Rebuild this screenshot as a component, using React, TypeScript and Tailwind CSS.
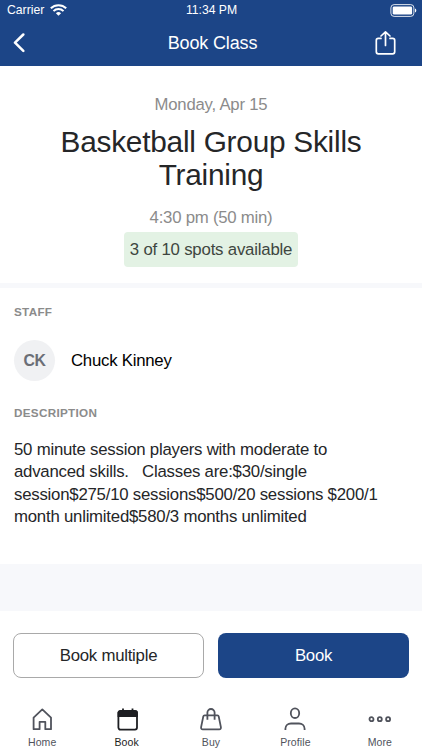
import clsx from "clsx";
import { ReactNode } from "react";

type Tab = {
  label: string;
  icon: ReactNode;
  active?: boolean;
};

const tabs: Tab[] = [
  {
    label: "Home",
    icon: (
      <path
        d="M3.600 10.600 12.300 2.400l8.700 8.200V22.200h-5.700V14.800H9.600v7.400h-6Z"
        strokeLinejoin="round"
      />
    ),
  },
  {
    label: "Book",
    active: true,
    icon: (
      <>
        <rect x="3.400" y="4" width="18.600" height="18.600" rx="2" />
        <path
          d="M4.500 3.500h16.400q1.900 0 1.900 2V10H2.600V5.500q0-2 1.900-2Z"
          fill="currentColor"
          stroke="none"
        />
        <path d="M8 1.600v3M17.500 1.600v3" />
      </>
    ),
  },
  {
    label: "Buy",
    icon: (
      <>
        <path
          d="M5.600 8.400h12.800q1.100 0 1.300 1l2.200 10.700q.3 2.200-1.700 2.200H3.800q-2 0-1.700-2.200L4.300 9.400q.2-1 1.300-1Z"
          strokeLinejoin="round"
        />
        <path d="M8.400 12.800V5.600a3.600 3.600 0 0 1 7.200 0V12.800" />
      </>
    ),
  },
  {
    label: "Profile",
    icon: (
      <>
        <ellipse cx="12" cy="6.200" rx="4.200" ry="4.800" />
        <path d="M2.400 23v-1.200c0-3.300 2.600-5.300 5.600-5.300h8c3 0 5.600 2 5.600 5.300V23" />
      </>
    ),
  },
  {
    label: "More",
    icon: (
      <>
        <circle cx="3.500" cy="12.200" r="2" />
        <circle cx="11.800" cy="12.200" r="2" />
        <circle cx="20.100" cy="12.200" r="2" />
      </>
    ),
  },
];

function StatusBar() {
  return (
    <div className="flex h-5 items-center justify-between pr-[5px] pl-[7px] text-[12.200px]">
      <div className="flex flex-1 items-center gap-[6px]">
        <span>Carrier</span>
        <svg
          className="h-[12px] w-[17px]"
          viewBox="0 0 17 12"
          fill="none"
          stroke="currentColor"
          strokeWidth="2"
        >
          <path d="M.8 4.300a11 11 0 0 1 15.400 0M3.500 7.100a7 7 0 0 1 10 0" />
          <path
            d="M8.500 11.800 5.900 9.200a3.700 3.700 0 0 1 5.200 0Z"
            fill="currentColor"
            stroke="none"
          />
        </svg>
      </div>
      <span className="pr-px">11:34 PM</span>
      <div className="flex flex-1 justify-end">
        <svg className="h-[13px] w-[27px]" viewBox="0 0 27 13" fill="none">
          <rect
            x=".9"
            y=".6"
            width="23"
            height="11.800"
            rx="3.200"
            stroke="currentColor"
            strokeOpacity=".85"
          />
          <rect x="2.700" y="2.400" width="19.400" height="8.200" rx="1.400" fill="currentColor" />
          <path d="M25 4.500c1.800.8 1.800 3.200 0 4Z" fill="currentColor" />
        </svg>
      </div>
    </div>
  );
}

export default function App() {
  return (
    <div className="flex h-[750px] w-[422px] flex-col overflow-hidden bg-white font-['Liberation_Sans',Arial,sans-serif] text-[#252628]">
      {/* Header */}
      <header className="h-[66px] shrink-0 bg-[#1c4587] text-white">
        <StatusBar />
        <div className="flex h-[46px] items-center justify-between pr-[25px] pl-[13px]">
          <div className="flex-1">
            <svg
              className="h-5 w-3"
              viewBox="0 0 12 20"
              fill="none"
              stroke="currentColor"
              strokeWidth="2.500"
            >
              <path
                d="m10.300 1.500-8.300 8.200 8.300 8.200"
                strokeLinecap="round"
                strokeLinejoin="round"
              />
            </svg>
          </div>
          <h1 className="pl-[15px] text-[18px] tracking-[-0.15px]">Book Class</h1>
          <div className="flex flex-1 justify-end">
            <svg
              className="h-[26px] w-[22px]"
              viewBox="0 0 22 26"
              fill="none"
              stroke="currentColor"
              strokeWidth="1.700"
              strokeLinecap="round"
              strokeLinejoin="round"
            >
              <path d="M6 8.400H3.300a2 2 0 0 0-2 2v11.400a2 2 0 0 0 2 2h14.400a2 2 0 0 0 2-2V10.400a2 2 0 0 0-2-2H15" />
              <path d="M10.500 15.500V1.900M6 6l4.500-4.200L15 6" />
            </svg>
          </div>
        </div>
      </header>

      {/* Class summary */}
      <section className="flex h-[217px] shrink-0 flex-col items-center pt-7 text-center">
        <p className="text-[16.700px] leading-[22px] tracking-[-0.2px] text-[#8b8b8b]">
          Monday, Apr 15
        </p>
        <h2 className="mt-[9px] w-[340px] text-[29.800px] leading-[33px] tracking-[-0.24px]">
          Basketball Group Skills Training
        </h2>
        <p className="mt-4 text-[16.800px] leading-[22px] tracking-[-0.25px] text-[#8b8b8b]">
          4:30 pm (50 min)
        </p>
        <p className="mt-[3px] h-[35px] rounded-[4px] bg-[#e3f2e4] px-[5.500px] text-[16.800px] leading-[35px] tracking-[-0.2px] text-[#3e4640]">
          3 of 10 spots available
        </p>
      </section>
      <div className="h-[5px] shrink-0 bg-[#f7f8fb]" />

      {/* Staff and description */}
      <section className="h-[276px] shrink-0 px-[14px] pt-[17px]">
        <h3 className="text-[11.700px] leading-[14px] font-bold tracking-[0.3px] text-[#8b8b8b]">
          STAFF
        </h3>
        <div className="mt-[21px] flex items-center gap-4">
          <div className="flex size-[41px] items-center justify-center rounded-full bg-[#f0f1f3] pt-px text-[15.800px] font-bold tracking-[-0.4px] text-[#6b6e76]">
            CK
          </div>
          <span className="text-[16.800px] tracking-[-0.25px] text-black">Chuck Kinney</span>
        </div>
        <h3 className="mt-[25px] text-[11.700px] leading-[14px] font-bold tracking-[0.3px] text-[#8b8b8b]">
          DESCRIPTION
        </h3>
        <p className="mt-[19px] text-[16.800px] leading-[22.300px] tracking-[-0.23px] whitespace-pre">
          {"50 minute session players with moderate to\n"}
          {"advanced skills.   Classes are:$30/single\n"}
          {"session$275/10 sessions$500/20 sessions $200/1\n"}
          {"month unlimited$580/3 months unlimited"}
        </p>
      </section>
      <div className="h-[47px] shrink-0 bg-[#f7f8fb]" />

      {/* Actions */}
      <div className="grid shrink-0 grid-cols-2 gap-[14px] px-[13px] pt-[22px] text-[16.800px] tracking-[-0.25px]">
        <button className="h-[45px] rounded-[8px] border border-[#a9a9a9]">Book multiple</button>
        <button className="h-[45px] rounded-[8px] bg-[#1c4587] text-white">Book</button>
      </div>

      {/* Bottom tabs */}
      <nav className="mt-[29px] grid shrink-0 grid-cols-5">
        {tabs.map((tab) => (
          <a
            key={tab.label}
            className={clsx(
              "flex flex-col items-center gap-1 text-[10.500px] leading-[14px] tracking-[0.1px]",
              tab.active ? "text-[#1d1e22]" : "text-[#50535c]"
            )}
          >
            <svg
              className="h-6 w-6"
              viewBox="0 0 24 24"
              fill="none"
              stroke="currentColor"
              strokeWidth="1.800"
            >
              {tab.icon}
            </svg>
            {tab.label}
          </a>
        ))}
      </nav>
    </div>
  );
}
